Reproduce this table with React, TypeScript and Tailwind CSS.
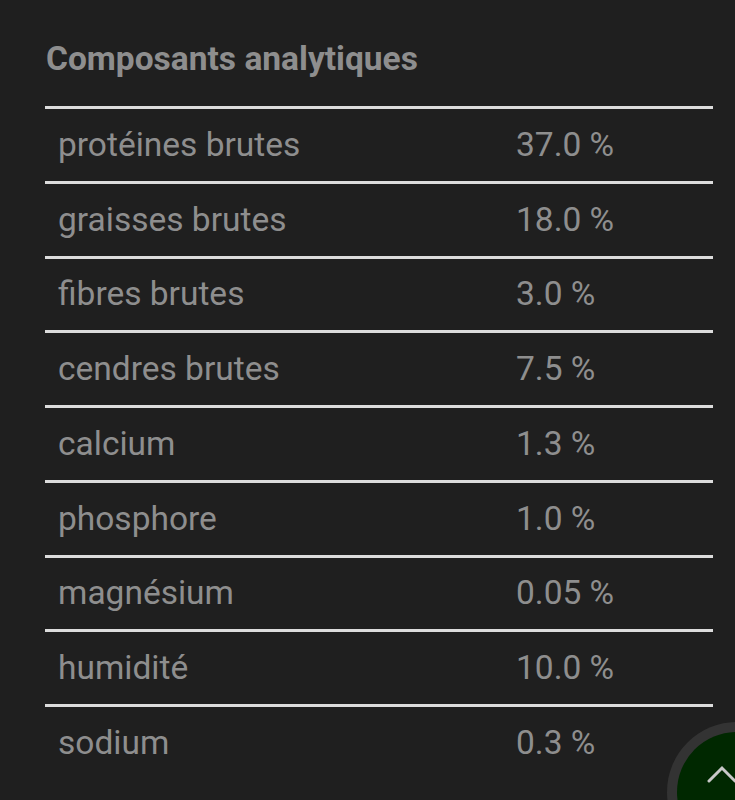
import React from 'react';

const rows = [
  ['protéines brutes', '37.0 %'],
  ['graisses brutes', '18.0 %'],
  ['fibres brutes', '3.0 %'],
  ['cendres brutes', '7.5 %'],
  ['calcium', '1.3 %'],
  ['phosphore', '1.0 %'],
  ['magnésium', '0.05 %'],
  ['humidité', '10.0 %'],
  ['sodium', '0.3 %'],
];

export default function App() {
  return (
    <div className="relative h-[800px] w-[735px] overflow-hidden bg-[#1f1f1f] font-['Roboto',sans-serif] text-[#8e8e8e]">
      <div className="pl-[45px] pr-[22px] pt-[39px]">
        <h2 className="pl-px text-[33.5px] font-bold leading-[40px]">Composants analytiques</h2>
        <div className="mt-[27px]">
          {rows.map(([name, value]) => (
            <div
              key={name}
              className="grid h-[74.75px] grid-cols-[471px_1fr] items-center border-t-[3px] border-[#dcdcdc] text-[33.5px]"
            >
              <span className="pl-[13px]">{name}</span>
              <span>{value}</span>
            </div>
          ))}
        </div>
      </div>

      {/* scroll to top button */}
      <button className="absolute left-[667px] top-[722px] flex h-[140px] w-[140px] items-start justify-start rounded-full bg-[#333333] p-[10px]">
        <span className="flex h-[120px] w-[120px] items-start rounded-full bg-[#002800] pl-[30px] pt-[32px]">
          <svg width="30" height="20" viewBox="0 0 30 20" fill="none" stroke="#c8c8c8" strokeWidth="3" strokeLinecap="round">
            <path d="M2 17 L15 4 L28 17" />
          </svg>
        </span>
      </button>
    </div>
  );
}
